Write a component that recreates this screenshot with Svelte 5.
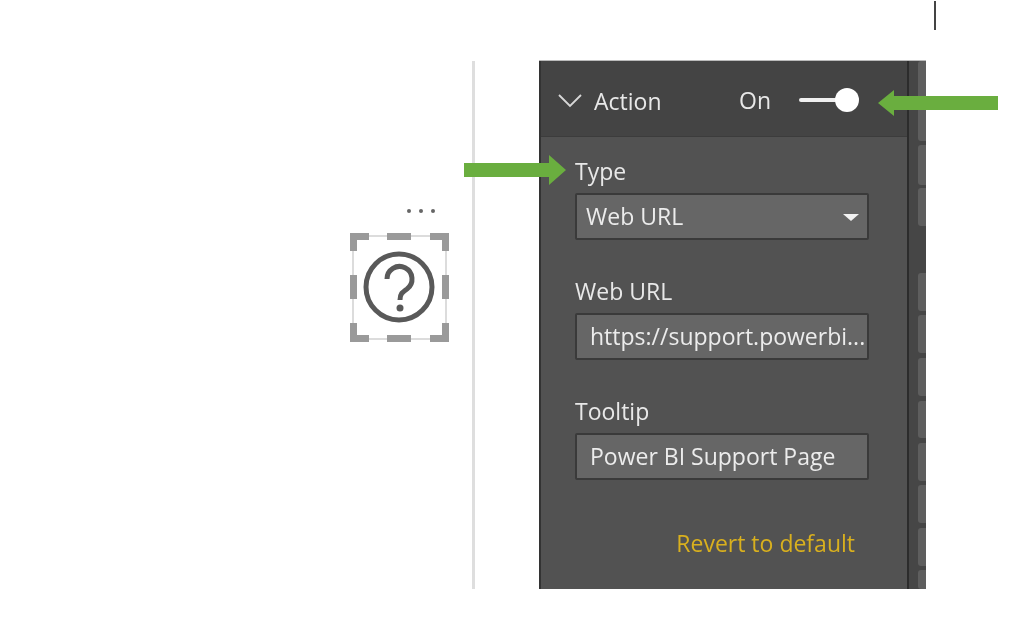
<script>
  const tabs = [
    [0, 80], [84, 40], [127, 38], [212, 38], [254, 38], [297, 38], [340, 37], [382, 38], [424, 38], [467, 38], [509, 19]
  ];
</script>

<div class="page">
  <div class="cursor"></div>

  <div class="canvas">
    <div class="visual">
      <div class="dots"><i></i><i></i><i></i></div>
      <svg class="frame" width="99" height="109" viewBox="0 0 99 109">
        <rect x="3" y="3" width="93" height="103" fill="none" stroke="#dcdcdc" stroke-width="2" />
        <path d="M3.500 18V3.500H19M37 3.500H61M80 3.500H95.500V18M95.500 42V66M95.500 90V105.500H80M61 105.500H37M19 105.500H3.500V90M3.500 66V42" fill="none" stroke="#9a9a9a" stroke-width="7" />
        <circle cx="49" cy="54" r="33" fill="none" stroke="#595959" stroke-width="5" />
        <path d="M37 46a12.500 12.500 0 1 1 20 10c-5 3.500-7 5-7 11" fill="none" stroke="#595959" stroke-width="5" />
        <circle cx="50" cy="75" r="3.500" fill="#595959" />
      </svg>
    </div>
    <div class="divider"></div>
  </div>

  <section class="panel">
    <div class="main">
      <header class="head">
        <svg class="chevron" width="26" height="16" viewBox="0 0 26 16">
          <path d="M2 2l11 11L24 2" fill="none" stroke="#d8d8d8" stroke-width="1.800" />
        </svg>
        <span class="title">Action</span>
        <span class="state">On</span>
        <div class="toggle"><span class="track"></span><span class="knob"></span></div>
      </header>
      <div class="body">
        <div class="label first">Type</div>
        <div class="field select">Web URL<span class="caret"></span></div>
        <div class="label">Web URL</div>
        <div class="field">https://support.powerbi...</div>
        <div class="label">Tooltip</div>
        <div class="field">Power BI Support Page</div>
        <div class="revert">Revert to default</div>
      </div>
    </div>
    <div class="strip">
      {#each tabs as [top, height]}
        <span class="tab" style="top: {top}px; height: {height}px"></span>
      {/each}
    </div>
  </section>

  <svg class="arrow left" width="103" height="32" viewBox="0 0 103 32">
    <path d="M0 9H85V1L102 16L85 31V23H0Z" fill="#6aae3f" />
  </svg>
  <svg class="arrow right" width="121" height="28" viewBox="0 0 121 28">
    <path d="M120 7H16V1L0 14L16 27V21H120Z" fill="#6aae3f" />
  </svg>
</div>

<style>
  :global(body) {
    margin: 0;
    background: #fff;
  }
  .page {
    position: relative;
    display: flex;
    width: 1009px;
    height: 641px;
    padding-top: 61px;
    box-sizing: border-box;
    overflow: hidden;
    font-family: "Open Sans", "Noto Sans", sans-serif;
  }
  .cursor {
    position: absolute;
    left: 934px;
    top: 1px;
    width: 2px;
    height: 29px;
    background: #444;
  }
  .canvas {
    display: flex;
    justify-content: flex-end;
    width: 475px;
    height: 528px;
    flex: none;
  }
  .visual {
    display: flex;
    flex-direction: column;
    align-items: flex-end;
    margin-top: 148px;
    margin-right: 23px;
  }
  .dots {
    display: flex;
    gap: 8px;
    margin-right: 14px;
    margin-bottom: 20px;
  }
  .dots i {
    width: 4px;
    height: 4px;
    border-radius: 50%;
    background: #666;
  }
  .frame {
    display: block;
    filter: blur(0.6px);
  }
  .divider {
    width: 3px;
    background: #dedede;
  }
  .panel {
    display: flex;
    width: 387px;
    height: 528px;
    margin-left: 64px;
    flex: none;
    box-shadow: 0 -1px 0 #bbb;
    filter: blur(0.6px);
  }
  .main {
    display: flex;
    flex-direction: column;
    width: 366px;
    border-left: 2px solid #333;
    border-right: 2px solid #2c2c2c;
  }
  .head {
    display: flex;
    align-items: center;
    height: 76px;
    box-sizing: border-box;
    padding: 4px 48px 0 16px;
    background: #444;
    border-bottom: 1px solid #3c3c3c;
    color: #e8e8e8;
    font-size: 23px;
  }
  .title {
    margin-left: 11px;
  }
  .chevron {
    margin-top: 1px;
  }
  .state {
    margin-left: auto;
    margin-right: 28px;
    margin-top: -2px;
  }
  .toggle {
    display: flex;
    align-items: center;
    margin-top: -2px;
  }
  .track {
    width: 38px;
    height: 4px;
    border-radius: 2px;
    background: #f0f0f0;
  }
  .knob {
    width: 24px;
    height: 24px;
    margin-left: -2px;
    border-radius: 50%;
    background: #fff;
  }
  .body {
    flex: 1;
    padding: 0 38px 0 34px;
    background: #525252;
    color: #e8e8e8;
    font-size: 23px;
  }
  .label {
    height: 31px;
    margin-top: 36px;
    line-height: 31px;
  }
  .label.first {
    margin-top: 19px;
    margin-bottom: 6px;
  }
  .label + .field {
    margin-top: 6px;
  }
  .label.first + .field {
    margin-top: 0;
  }
  .field {
    display: flex;
    align-items: center;
    height: 47px;
    box-sizing: border-box;
    padding: 0 0 1px 13px;
    background: #666;
    border: 2px solid #3a3a3a;
    border-radius: 2px;
    white-space: nowrap;
    overflow: hidden;
    color: #ececec;
    font-size: 23px;
  }
  .select {
    position: relative;
    padding-left: 9px;
    padding-bottom: 2px;
  }
  .caret {
    position: absolute;
    right: 8px;
    top: 19px;
    border-left: 8px solid transparent;
    border-right: 8px solid transparent;
    border-top: 7px solid #f2f2f2;
  }
  .revert {
    margin-top: 47px;
    margin-right: 14px;
    text-align: right;
    color: #d9b01e;
    font-size: 23px;
  }
  .strip {
    position: relative;
    flex: 1;
    background: #464646;
  }
  .tab {
    position: absolute;
    left: 9px;
    right: 0;
    border-radius: 3px 0 0 3px;
    background: #5e5e5e;
  }
  .arrow {
    position: absolute;
  }
  .arrow.left {
    left: 464px;
    top: 154px;
  }
  .arrow.right {
    left: 878px;
    top: 89px;
  }
</style>
